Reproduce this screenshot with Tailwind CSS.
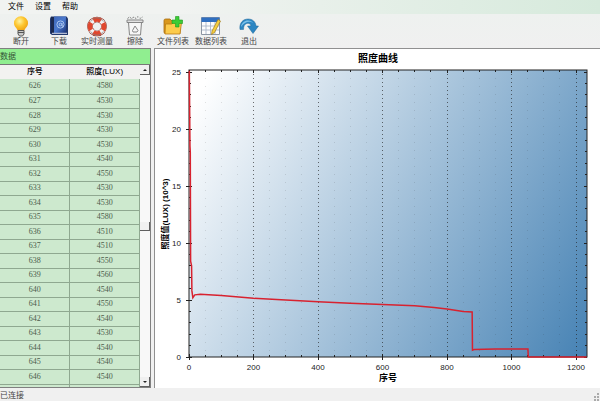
<!DOCTYPE html>
<html lang="zh-CN">
<head>
  <meta charset="UTF-8" />
  <meta name="viewport" content="width=device-width, initial-scale=1.0" />
  <title>照度曲线</title>
  <script src="https://cdn.jsdelivr.net/npm/@tailwindcss/browser@4"></script>
</head>
<body class="h-screen flex flex-col overflow-hidden bg-[#f0f0f0] text-[#222] text-[8px] leading-[10px] font-['Liberation_Sans','Noto_Sans_CJK_SC',sans-serif]">

  <!-- Menu -->
  <nav class="flex gap-[11px] px-2 pt-[2px] h-[14px] bg-linear-to-r from-[#f1f3f1] from-30% to-[#d6eadc] text-black">
    <a href="#file">文件</a>
    <a href="#settings">设置</a>
    <a href="#help">帮助</a>
  </nav>

  <!-- Toolbar -->
  <div class="flex h-[34px] px-[2px] pt-[1px] bg-linear-to-b from-[#eef1ef] to-[#f0f0f0] text-[#444]">
    <button class="w-[38px] flex flex-col items-center">
      <svg class="w-[22px] h-[22px] shrink-0" viewBox="0 0 22 22">
        <defs>
          <radialGradient id="bulb" cx="0.4" cy="0.35" r="0.7">
            <stop offset="0" stop-color="#fff3a0" />
            <stop offset="0.5" stop-color="#fdc62f" />
            <stop offset="1" stop-color="#ee9f10" />
          </radialGradient>
        </defs>
        <path d="M11 1.2a7 7 0 0 1 7 7c0 3.600-3 4.600-3.600 7.400H7.600C7 12.800 4 11.800 4 8.200a7 7 0 0 1 7-7z" fill="url(#bulb)" />
        <path d="M8 15.500h6v3.500l-1.500 2h-3L8 19z" fill="#c9c9c9" stroke="#555" stroke-width="1" />
        <path d="M8 17.500h6" stroke="#555" stroke-width="1" />
      </svg>
      <span>断开</span>
    </button>
    <button class="w-[38px] flex flex-col items-center">
      <svg class="w-[22px] h-[22px] shrink-0" viewBox="0 0 22 22">
        <defs>
          <linearGradient id="book" x1="0" y1="0" x2="1" y2="1">
            <stop offset="0" stop-color="#3f68ba" />
            <stop offset="0.5" stop-color="#4a78cc" />
            <stop offset="1" stop-color="#1c3478" />
          </linearGradient>
        </defs>
        <path d="M3 1.500h15.500l1.500 2v16.500H4l-2-1.500v-15z" fill="#22396f" />
        <path d="M6 1.500h12v16.500H6z" fill="url(#book)" />
        <path d="M3 2h3v16H3z" fill="#1c2a50" />
        <path d="M4 18.300h15" stroke="#d7dced" stroke-width="1" />
        <circle cx="12.500" cy="9.500" r="3.600" fill="none" stroke="#a9c4ee" stroke-width="1" />
        <circle cx="12.500" cy="9.500" r="1.300" fill="none" stroke="#a9c4ee" />
        <path d="M14 8v3.200h2" fill="none" stroke="#a9c4ee" />
      </svg>
      <span>下载</span>
    </button>
    <button class="w-[38px] flex flex-col items-center">
      <svg class="w-[22px] h-[22px] shrink-0" viewBox="0 0 22 22">
        <circle cx="11" cy="11.500" r="7" fill="none" stroke="#7f2317" stroke-width="5.600" />
        <circle cx="11" cy="11.500" r="7" fill="none" stroke="#f3f3f3" stroke-width="4.600" />
        <circle cx="11" cy="11.500" r="7" fill="none" stroke="#e0482f" stroke-width="4.600" stroke-dasharray="7.700 3.300" stroke-dashoffset="3.850" />
        <path d="M4.500 6.500Q11-1 17.500 6.500M4.500 16.500Q11 24 17.500 16.500" fill="none" stroke="#777" stroke-width="0.600" />
      </svg>
      <span class="whitespace-nowrap">实时测量</span>
    </button>
    <button class="w-[38px] flex flex-col items-center">
      <svg class="w-[22px] h-[22px] shrink-0" viewBox="0 0 22 22" fill="none" stroke="#858585">
        <path d="M4.500 7.500h13l-1 12.500h-11z" fill="#f6f6f6" />
        <path d="M3 5h16v2.500H3z" fill="#e2e2e2" />
        <path d="M3.500 3.500l2-1.500 2 1.500 2.500-1.500 2 1.500 2-2 2 2 2.500-1.500" stroke-dasharray="2 1" />
        <path d="M8.500 15.500l2.500-4.500 3 4.500-1 1.500H9z" />
      </svg>
      <span>擦除</span>
    </button>
    <button class="w-[38px] flex flex-col items-center">
      <svg class="w-[22px] h-[22px] shrink-0" viewBox="0 0 22 22">
        <path d="M2 5.500q0-1.500 1.500-1.500h4.500l2 2h8v12.500H3.500Q2 18.500 2 17z" fill="#d9971c" stroke="#a86c0c" stroke-width="0.800" />
        <path d="M3.500 9h6l2-1.500h8l-1.500 11.500H3z" fill="#fccb4c" stroke="#b97a12" stroke-width="0.800" />
        <path d="M13.500 1.500h3.500v3.500h3.500v3.500H17V12h-3.500V8.500H10V5h3.500z" fill="#3ccc35" stroke="#1c9a1d" stroke-width="0.600" />
      </svg>
      <span class="whitespace-nowrap">文件列表</span>
    </button>
    <button class="w-[38px] flex flex-col items-center">
      <svg class="w-[22px] h-[22px] shrink-0" viewBox="0 0 22 22">
        <path d="M1.500 2.500h18v17h-18z" fill="#fdfdfd" stroke="#8b95a3" />
        <path d="M1.500 2.500h18V7h-18z" fill="#2f6fc0" />
        <path d="M2 11h17M2 15h17M6 7v12M10.500 7v12M15 7v12" stroke="#a9b6c8" stroke-width="0.900" />
        <path d="M18 4.500l2.500 1.500-6 11.500-3 2 .5-3.500z" fill="#f4cf3f" stroke="#a07a1c" stroke-width="0.700" />
      </svg>
      <span class="whitespace-nowrap">数据列表</span>
    </button>
    <button class="w-[38px] flex flex-col items-center">
      <svg class="w-[22px] h-[22px] shrink-0" viewBox="0 0 22 22">
        <path d="M2 14.500C1 8 5 4 10 4c5 0 7.500 3 8 7h2.500l-5.500 7.500L9.500 11H13c-.5-2-2-3-4.200-2.500C6.500 9 5.500 11 5.500 14.500z" fill="#2c86c2" stroke="#1d6699" stroke-width="0.500" />
        <path d="M3 12c.5-4 3.500-6.500 7-6.500 2.500 0 4 1 5 2.500-3-2-8-2-12 4z" fill="#7cc2ea" />
      </svg>
      <span>退出</span>
    </button>
  </div>

  <main class="flex-1 min-h-0 flex gap-[3px]">
    <!-- Data list -->
    <section class="w-[151px] shrink-0 flex flex-col border-t border-r border-b border-[#808080] bg-[#f0f0f0]">
      <h2 class="h-[15px] shrink-0 pt-[3px] bg-[#90ee90] text-[#355535]">数据</h2>
      <div class="flex-1 min-h-0 flex border-t border-[#777]">
        <div class="flex-1 overflow-hidden">
          <table class="w-full table-fixed border-collapse text-center">
            <thead>
              <tr class="h-[14px] bg-[#f2f2f0] text-black">
                <th class="p-0 font-medium">序号</th>
                <th class="p-0 font-medium">照度(LUX)</th>
              </tr>
            </thead>
            <tbody id="rows" class="bg-[#cde9ce] text-[#4c5c4c] font-['Liberation_Serif',serif]"></tbody>
          </table>
        </div>
        <!-- Scrollbar -->
        <div class="w-[10px] shrink-0 flex flex-col justify-between bg-[#f8f8f8]">
          <button aria-label="向上" class="h-[10px] flex items-center justify-center bg-[#f0f0f0] border-r border-b border-[#606060]">
            <svg class="w-1 h-1" viewBox="0 0 4 4"><path d="M0 3l2-2 2 2z" fill="#222" /></svg>
          </button>
          <div class="h-[9px] bg-[#f0f0f0] border-r border-b border-[#606060]"></div>
          <button aria-label="向下" class="h-[10px] flex items-center justify-center bg-[#f0f0f0] border-r border-b border-[#606060]">
            <svg class="w-1 h-1" viewBox="0 0 4 4"><path d="M0 1l2 2 2-2z" fill="#222" /></svg>
          </button>
        </div>
      </div>
    </section>

    <!-- Chart -->
    <section class="flex-1 min-w-0 border-t border-l border-[#909090] bg-white">
      <svg class="w-full h-full" viewBox="0 0 445 339" role="img" aria-label="照度曲线">
        <defs>
          <linearGradient id="plot" gradientUnits="userSpaceOnUse" x1="34" y1="21" x2="461" y2="256">
            <stop offset="0.04" stop-color="#ffffff" />
            <stop offset="1" stop-color="#4682b4" />
          </linearGradient>
        </defs>
        <rect x="34" y="21" width="398" height="287" fill="url(#plot)" />
        <g id="grid" shape-rendering="crispEdges"></g>
        <rect x="34" y="21" width="398" height="287" fill="none" stroke="#222" />
        <path id="curve" fill="none" stroke="#d8222f" stroke-width="1.500" />
        <text x="223" y="13" text-anchor="middle" class="text-[10px] font-bold fill-black">照度曲线</text>
        <text x="233" y="332" text-anchor="middle" class="text-[9px] font-bold fill-black">序号</text>
        <text transform="translate(13 165) rotate(-90)" text-anchor="middle" class="text-[8px] font-bold fill-black">照度值(LUX) (10^3)</text>
        <g id="labels" class="text-[8px] fill-[#222]"></g>
      </svg>
    </section>
  </main>

  <!-- Status bar -->
  <footer class="h-[13px] shrink-0 flex justify-between items-end pt-[2px] text-[#444]">
    <span class="h-[10px]">已连接</span>
    <svg class="w-2 h-2" viewBox="0 0 8 8" fill="#aaa">
      <path d="M5 0h2v2H5zM5 3h2v2H5zM5 6h2v2H5zM2 3h2v2H2zM2 6h2v2H2z" />
    </svg>
  </footer>

  <script>
    const lux = [4580, 4530, 4530, 4530, 4530, 4540, 4550, 4530, 4530, 4580, 4510,
      4510, 4550, 4560, 4540, 4550, 4540, 4530, 4540, 4540, 4540, 4530];

    document.getElementById('rows').innerHTML = lux.map((value, i) => `
      <tr class="odd:h-[15px] even:h-[14px]">
        <td class="p-0 border-b border-r border-[#8fa890]">${626 + i}</td>
        <td class="p-0 border-b border-r border-[#8fa890]">${value}</td>
      </tr>`).join('');

    // Value to chart position
    const px = v => 34 + v * 0.3225;
    const py = v => 308 - v * 11.4;

    let grid = '';
    let labels = '';
    const line = (x1, y1, x2, y2, extra = '') =>
      `<line x1="${x1}" y1="${y1}" x2="${x2}" y2="${y2}" stroke="#222" ${extra}/>`;

    for (let v = 0; v <= 1200; v += 50) {
      const x = px(v);
      const major = v % 200 === 0;
      if (v > 0) {
        grid += line(x, 21, x, 308, major
          ? 'stroke-opacity="0.65" stroke-dasharray="1 3"'
          : 'stroke-opacity="0.13" stroke-dasharray="1 7"');
      }
      grid += line(x, major ? 305 : 306, x, major ? 311 : 308) + line(x, 21, x, major ? 24 : 23);
      if (major) labels += `<text x="${x}" y="321" text-anchor="middle">${v}</text>`;
    }

    for (let v = 0; v <= 25; v++) {
      const y = py(v);
      const major = v % 5 === 0;
      grid += line(major ? 31 : 34, y, major ? 37 : 36, y) + line(major ? 429 : 430, y, 432, y);
      if (major) labels += `<text x="26" y="${y + 3}" text-anchor="end">${v}</text>`;
    }

    const points = [[1, 25.1], [3, 18.5], [4, 18], [5, 8.4], [8, 8], [9, 5.8], [12, 5.2], [18, 5.45],
      [35, 5.5], [100, 5.4], [200, 5.15], [300, 5], [400, 4.85], [500, 4.72], [600, 4.6],
      [700, 4.5], [760, 4.35], [800, 4.22], [850, 4], [878, 3.95], [879, 0.6], [884, 0.65],
      [950, 0.7], [1051, 0.7], [1052, 0], [1233, 0]];
    document.getElementById('grid').innerHTML = grid;
    document.getElementById('labels').innerHTML = labels;
    document.getElementById('curve').setAttribute('d',
      'M' + points.map(([a, b]) => `${px(a)} ${py(b)}`).join('L'));
  </script>
</body>
</html>
